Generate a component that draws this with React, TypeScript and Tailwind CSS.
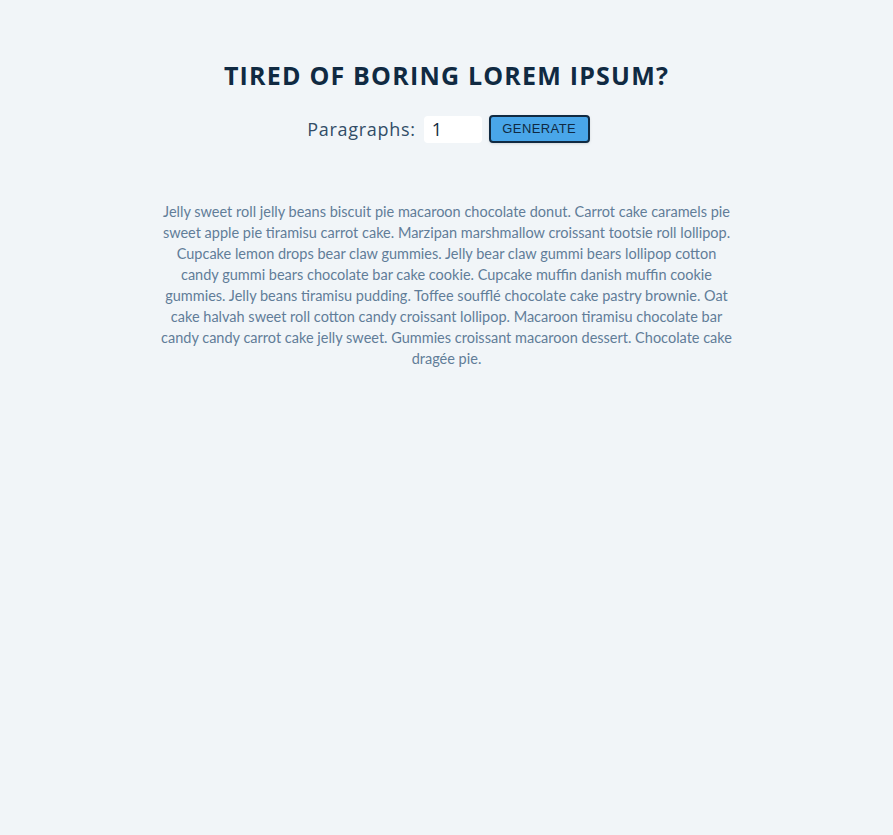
import React, { useState } from 'react';

const LINES = [
  'Jelly sweet roll jelly beans biscuit pie macaroon chocolate donut. Carrot cake caramels pie',
  'sweet apple pie tiramisu carrot cake. Marzipan marshmallow croissant tootsie roll lollipop.',
  'Cupcake lemon drops bear claw gummies. Jelly bear claw gummi bears lollipop cotton',
  'candy gummi bears chocolate bar cake cookie. Cupcake muffin danish muffin cookie',
  'gummies. Jelly beans tiramisu pudding. Toffee soufflé chocolate cake pastry brownie. Oat',
  'cake halvah sweet roll cotton candy croissant lollipop. Macaroon tiramisu chocolate bar',
  'candy candy carrot cake jelly sweet. Gummies croissant macaroon dessert. Chocolate cake',
  'dragée pie.',
];

const App: React.FC = () => {
  const [count, setCount] = useState('1');

  return (
    <div className="min-h-[835px] bg-[#f1f5f8] font-['Open_Sans',sans-serif]">
      <section className="mx-auto w-[90vw] max-w-[640px] pt-[57px] text-center">
        <h3 className="text-[25px] leading-[36px] font-bold uppercase tracking-[1.2px] text-[#102a42]">
          Tired of boring lorem ipsum?
        </h3>
        <form
          className="mt-[22px] flex items-center justify-center pl-[4px]"
          onSubmit={(e) => e.preventDefault()}
        >
          <label htmlFor="amount" className="text-[18px] tracking-[0.7px] text-[#324d67]">
            Paragraphs:
          </label>
          <input
            id="amount"
            type="number"
            value={count}
            onChange={(e) => setCount(e.target.value)}
            className="ml-[8px] h-[27px] w-[58px] rounded-[4px] bg-white px-[8px] text-[18px] text-[#102a42] outline-none"
          />
          <button
            type="submit"
            className="ml-[7px] h-[28px] w-[101px] rounded-[4px] border-2 border-[#102a42] bg-[#49a6e9] font-['Liberation_Sans',sans-serif] text-[13px] tracking-[0.4px] text-[#102a42] shadow-sm"
          >
            GENERATE
          </button>
        </form>
        <article className="mx-auto mt-[58px] w-[620px] font-['Lato',sans-serif] text-[14.5px] leading-[21px] text-[#617d98]">
          <p>
            {LINES.map((line, i) => (
              <React.Fragment key={i}>
                {line}
                {i < LINES.length - 1 && <br />}
              </React.Fragment>
            ))}
          </p>
        </article>
      </section>
    </div>
  );
};

export default App;
